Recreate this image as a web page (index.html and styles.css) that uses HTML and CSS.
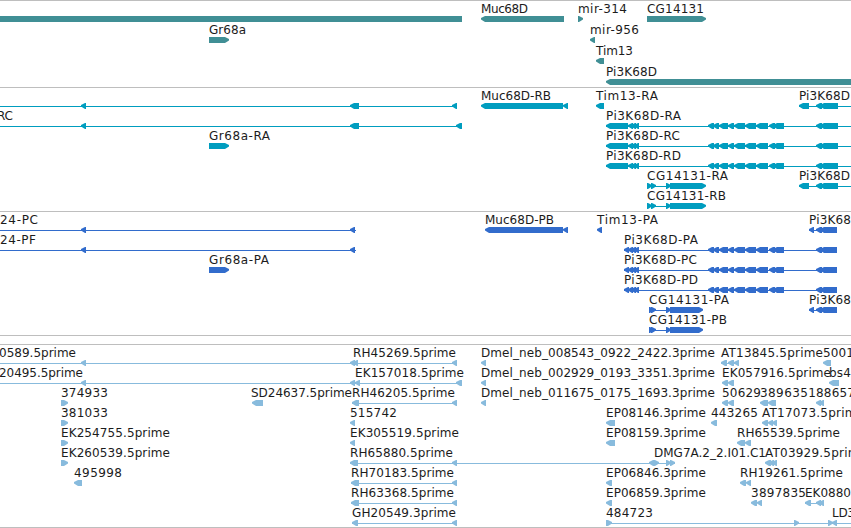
FILE: index.html
```html
<!DOCTYPE html>
<html lang="en">
<head>
  <meta charset="UTF-8">
  <meta name="viewport" content="width=device-width, initial-scale=1.0">
  <title>Genome Browser</title>
  <link rel="stylesheet" href="styles.css">
</head>
<body>
  <main class="browser">
    <section class="track genes" id="genes"></section>
    <section class="track transcripts" id="transcripts"></section>
    <section class="track proteins" id="proteins"></section>
    <section class="track spacer"></section>
    <section class="track ests" id="ests"></section>
  </main>
  <script src="tracks.js"></script>
</body>
</html>
```
FILE: styles.css
```css
body {
  margin: 0;
  padding: 0;
  background-color: white;
  overflow: hidden;
}
.browser {
  display: flex;
  flex-direction: column;
  width: 851px;
}
.track {
  box-sizing: border-box;
  border-top: 1px solid #bebebe;
  overflow: hidden;
}
.track svg {
  display: block;
  width: 851px;
  height: 100%;
}
.genes {
  height: 87px;
  color: #408f95;
}
.transcripts {
  height: 124px;
  color: #009dbf;
}
.proteins {
  height: 124px;
  color: #326ccc;
}
.spacer {
  height: 9px;
}
.ests {
  height: 184px;
  border-bottom: 1px solid #bebebe;
  color: #88bbdd;
}
.exon,
.intron {
  fill: currentColor;
}
.intron {
  shape-rendering: crispEdges;
}
.label {
  font-family: "DejaVu Sans", sans-serif;
  font-size: 12px;
  fill: #1c1c1c;
}
```
FILE: tracks.js
```js
// label: [x, text, end x]   feature: [x1, x2, strand]   line: [x1, x2]
const gr = [[209, 229, ">"]];
const cluster = [[708, 714, "<"], [713, 719, "<"], [719, 728, "<"], [728, 734, "<"], [734, 745, "<"],
  [745, 756, "<"], [756, 768, "<"], [769, 775, "<"], [773, 784, "<"]];
const piSmall = [[628, 633, "<"], [631, 636, "<"], [634, 639, "<"]];
const piR = [[606, 628, "<"], ...piSmall, ...cluster, [816, 822, "<"], [820, 838, "<"]];
const piP = [[624, 629, "<"], ...piSmall, ...cluster, [816, 822, "<"], [820, 837, "<"]];
const piShortR = [[799, 809, "<"], [816, 822, "<"], [820, 838, "<"]];
const piShortP = [[809, 814, "<"], [816, 822, "<"], [820, 837, "<"]];
const cgR = [[647, 652, ">"], [651, 656, ">"], [666, 671, ">"], [670, 706, ">"]];
const cgP = [[649, 654, ">"], [651, 656, ">"], [666, 671, ">"], [670, 703, ">"]];

const tracks = {
  genes: { pitch: 21, rows: [
    { labels: [[481, "Muc68D", 528], [578, "mir-314", 627], [647, "CG14131", 704]],
      exons: [[-5, 462, "-"], [481, 564, "<"], [578, 583, ">"], [647, 706, ">"]] },
    { labels: [[209, "Gr68a", 246], [590, "mir-956", 639]], exons: [...gr, [590, 595, "<"]] },
    { labels: [[596, "Tim13", 633]], exons: [[596, 604, "<"]] },
    { labels: [[606, "Pi3K68D", 657]], exons: [[606, 856, "<"]] }
  ] },
  transcripts: { pitch: 20, rows: [
    { labels: [[481, "Muc68D-RB", 551], [596, "Tim13-RA", 658], [799, "Pi3K68D", 850]],
      lines: [[-5, 457], [799, 856]],
      exons: [[81, 86, "<"], [350, 359, "<"], [452, 457, "<"], [481, 563, "<"], [563, 568, "<"], [596, 604, "<"], ...piShortR] },
    { labels: [[-3, "RC", 13], [606, "Pi3K68D-RA", 681]], lines: [[-5, 462], [606, 856]],
      exons: [[81, 86, "<"], [350, 359, "<"], [456, 462, "<"], ...piR] },
    { labels: [[209, "Gr68a-RA", 270], [606, "Pi3K68D-RC", 680]], lines: [[606, 856]], exons: [...gr, ...piR] },
    { labels: [[606, "Pi3K68D-RD", 681]], lines: [[606, 856]], exons: piR },
    { labels: [[647, "CG14131-RA", 728], [799, "Pi3K68D", 850]], lines: [[647, 670], [799, 856]], exons: [...cgR, ...piShortR] },
    { labels: [[647, "CG14131-RB", 726]], lines: [[647, 670]], exons: cgR }
  ] },
  proteins: { pitch: 20, rows: [
    { labels: [[0, "24-PC", 38], [485, "Muc68D-PB", 554], [597, "Tim13-PA", 658], [809, "Pi3K68", 851]],
      lines: [[-5, 356], [809, 821]],
      exons: [[81, 86, "<"], [350, 355, "<"], [485, 563, "<"], [563, 568, "<"], [597, 602, "<"], ...piShortP] },
    { labels: [[0, "24-PF", 36], [624, "Pi3K68D-PA", 698]], lines: [[-5, 356], [624, 837]],
      exons: [[81, 86, "<"], [350, 355, "<"], ...piP] },
    { labels: [[209, "Gr68a-PA", 269], [624, "Pi3K68D-PC", 697]], lines: [[624, 837]], exons: [...gr, ...piP] },
    { labels: [[624, "Pi3K68D-PD", 698]], lines: [[624, 837]], exons: piP },
    { labels: [[649, "CG14131-PA", 729], [809, "Pi3K68", 851]], lines: [[649, 670], [809, 821]], exons: [...cgP, ...piShortP] },
    { labels: [[649, "CG14131-PB", 727]], lines: [[649, 670]], exons: cgP }
  ] },
  ests: { pitch: 20, rows: [
    { labels: [[-1, "0589.5prime", 76], [353, "RH45269.5prime", 456], [481, "Dmel_neb_008543_0922_2422.3prime", 715], [721, "AT13845.5prime", 823], [823, "5001", 854]],
      lines: [[-5, 457], [721, 739]],
      exons: [[81, 86, "<"], [350, 355, "<"], [353, 358, "<"], [452, 457, "<"], [481, 486, "<"], [721, 727, "<"], [728, 734, "<"], [734, 739, "<"], [823, 831, "<"]] },
    { labels: [[-1, "20495.5prime", 83], [355, "EK157018.5prime", 464], [481, "Dmel_neb_002929_0193_3351.3prime", 715], [722, "EK057916.5prime", 831], [829, "bs4", 851]],
      lines: [[-5, 462]],
      exons: [[81, 86, "<"], [350, 355, "<"], [355, 360, "<"], [456, 462, "<"], [481, 486, "<"], [722, 728, "<"], [728, 734, "<"], [829, 839, "<"]] },
    { labels: [[61, "374933", 108], [251, "SD24637.5prime", 352], [352, "RH46205.5prime", 455], [481, "Dmel_neb_011675_0175_1693.3prime", 715], [722, "50629", 761], [760, "3896351", 816], [816, "88657", 855]],
      lines: [[352, 457]],
      exons: [[61, 68, ">"], [252, 263, "<"], [352, 359, "<"], [452, 457, "<"], [481, 486, "<"], [722, 728, "<"], [728, 734, "<"], [760, 768, "<"], [768, 776, "<"], [816, 821, "<"], [819, 824, "<"]] },
    { labels: [[61, "381033", 108], [350, "515742", 397], [606, "EP08146.3prime", 706], [711, "443265", 758], [762, "AT17073.5prime", 864]],
      exons: [[61, 68, ">"], [350, 355, "<"], [606, 615, "<"], [711, 717, "<"], [762, 768, "<"], [768, 773, "<"], [772, 777, "<"]] },
    { labels: [[61, "EK254755.5prime", 170], [350, "EK305519.5prime", 459], [606, "EP08159.3prime", 706], [737, "RH65539.5prime", 840]],
      exons: [[61, 68, ">"], [350, 355, "<"], [606, 615, "<"], [737, 745, "<"], [745, 751, "<"]] },
    { labels: [[61, "EK260539.5prime", 170], [350, "RH65880.5prime", 453], [654, "DMG7A.2_2.I01.C1", 766], [765, "AT03929.5prime", 867]],
      lines: [[350, 675]],
      exons: [[61, 68, ">"], [350, 358, "<"], [452, 457, "<"], [649, 654, "<"], [654, 659, ">"], [666, 671, ">"], [670, 675, ">"], [765, 771, "<"], [769, 774, "<"], [772, 777, "<"]] },
    { labels: [[74, "495998", 122], [351, "RH70183.5prime", 454], [606, "EP06846.3prime", 706], [740, "RH19261.5prime", 843]],
      lines: [[351, 457]],
      exons: [[74, 82, "<"], [351, 359, "<"], [452, 457, "<"], [606, 612, "<"], [740, 746, "<"], [746, 751, "<"]] },
    { labels: [[351, "RH63368.5prime", 454], [606, "EP06859.3prime", 706], [751, "3897835", 806], [805, "EK0880", 851]],
      lines: [[351, 457], [805, 824]],
      exons: [[351, 359, "<"], [452, 457, "<"], [606, 612, "<"], [751, 757, "<"], [757, 762, "<"], [805, 811, "<"], [816, 821, "<"], [819, 824, "<"]] },
    { labels: [[352, "GH20549.3prime", 456], [606, "484723", 653], [832, "LD3", 855]],
      lines: [[352, 457], [606, 856]],
      exons: [[352, 358, "<"], [452, 457, "<"], [606, 612, ">"], [794, 799, ">"], [828, 833, ">"], [832, 837, "<"]] }
  ] }
};

// arrowheads have a slightly blunt tip so that 5px exons stay readable
function exonPoints(x1, x2, strand, y) {
  const head = 4;
  if (strand === "<") return `${x1},${y + 2} ${x1 + head},${y} ${x2},${y} ${x2},${y + 6} ${x1 + head},${y + 6} ${x1},${y + 3.5}`;
  if (strand === ">") return `${x1},${y} ${x2 - head},${y} ${x2},${y + 2} ${x2},${y + 3.5} ${x2 - head},${y + 6} ${x1},${y + 6}`;
  return `${x1},${y} ${x2},${y} ${x2},${y + 6} ${x1},${y + 6}`;
}

for (const [id, track] of Object.entries(tracks)) {
  let svg = "";
  track.rows.forEach((row, i) => {
    const y = 15 + i * track.pitch;
    for (const [x1, x2] of row.lines || []) {
      svg += `<rect class="intron" x="${x1}" y="${y + 3}" width="${x2 - x1}" height="1"/>`;
    }
    for (const [x1, x2, strand] of row.exons) {
      svg += `<polygon class="exon" points="${exonPoints(x1, x2, strand, y)}"/>`;
    }
    for (const [x, text, end] of row.labels) {
      svg += `<text class="label" x="${x}" y="${y - 3}" textLength="${end - x}">${text}</text>`;
    }
  });
  document.getElementById(id).innerHTML = `<svg>${svg}</svg>`;
}
```
